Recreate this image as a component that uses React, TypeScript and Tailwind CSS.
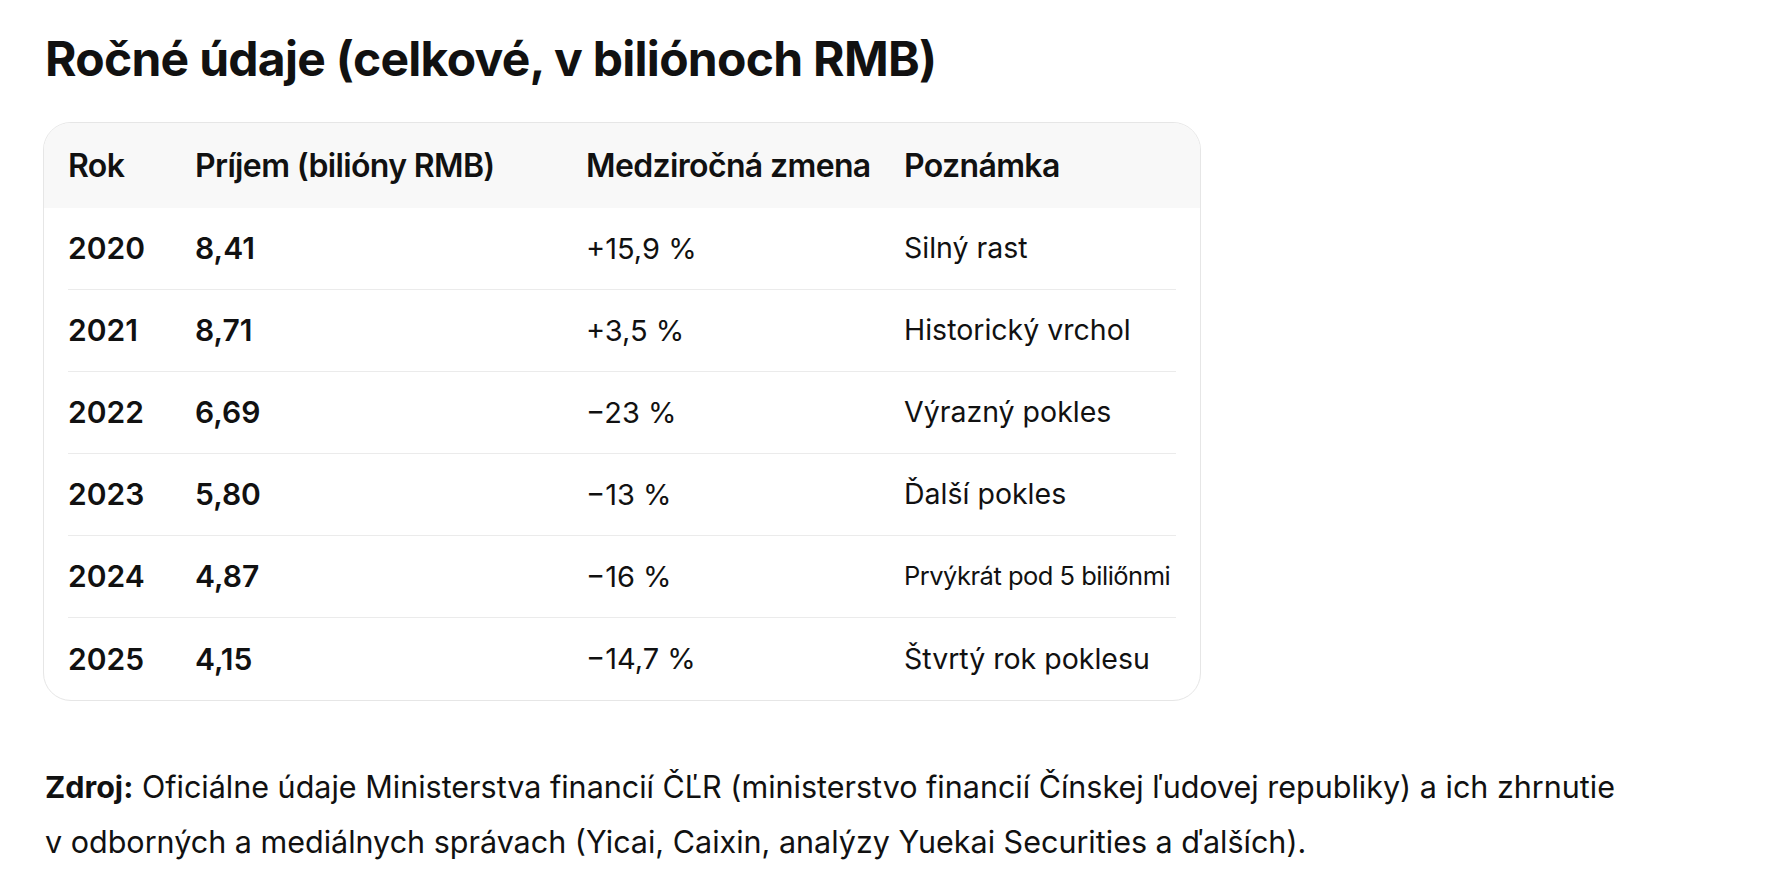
import React from 'react';

interface Row {
  year: string;
  revenue: string;
  change: string;
  note: string;
  small?: boolean;
}

const rows: Row[] = [
  { year: '2020', revenue: '8,41', change: '+15,9 %', note: 'Silný rast' },
  { year: '2021', revenue: '8,71', change: '+3,5 %', note: 'Historický vrchol' },
  { year: '2022', revenue: '6,69', change: '−23 %', note: 'Výrazný pokles' },
  { year: '2023', revenue: '5,80', change: '−13 %', note: 'Ďalší pokles' },
  { year: '2024', revenue: '4,87', change: '−16 %', note: 'Prvýkrát pod 5 biliőnmi', small: true },
  { year: '2025', revenue: '4,15', change: '−14,7 %', note: 'Štvrtý rok poklesu' },
];

const cols = 'grid grid-cols-[127px_391px_318px_1fr] items-center';

const App = () => {
  return (
    <div className="min-h-screen bg-white px-[45px] pt-[31px] text-[#111111] font-['Inter',sans-serif]">
      <h1 className="text-[48px] leading-[55px] font-bold tracking-[-0.015em]">
        Ročné údaje (celkové, v biliónoch RMB)
      </h1>

      {/* table card */}
      <div className="mt-[36px] -ml-[2px] w-[1158px] rounded-[28px] border border-[#e6e6e6] overflow-hidden">
        <div className={`${cols} h-[85px] bg-[#f8f8f8] px-6 text-[32px] font-semibold tracking-[-0.02em]`}>
          <div>Rok</div>
          <div>Príjem (bilióny RMB)</div>
          <div>Medziročná zmena</div>
          <div>Poznámka</div>
        </div>
        <div className="px-6">
          {rows.map((row, idx) => (
            <div
              key={row.year}
              className={`${cols} h-[82px] ${idx < rows.length - 1 ? 'border-b border-[#ebebeb]' : ''}`}
            >
              <div className="text-[30px] font-semibold">{row.year}</div>
              <div className="text-[30px] font-semibold">{row.revenue}</div>
              <div className="text-[29px]">{row.change}</div>
              <div className={row.small ? 'text-[25.5px] tracking-[-0.02em]' : 'text-[28.5px]'}>{row.note}</div>
            </div>
          ))}
        </div>
      </div>

      <p className="mt-[58px] text-[30.5px] leading-[55px]">
        <span className="font-bold">Zdroj:</span> Oficiálne údaje Ministerstva financií ČĽR (ministerstvo financií Čínskej ľudovej republiky) a ich zhrnutie
        <br />
        v odborných a mediálnych správach (Yicai, Caixin, analýzy Yuekai Securities a ďalších).
      </p>
    </div>
  );
};

export default App;
